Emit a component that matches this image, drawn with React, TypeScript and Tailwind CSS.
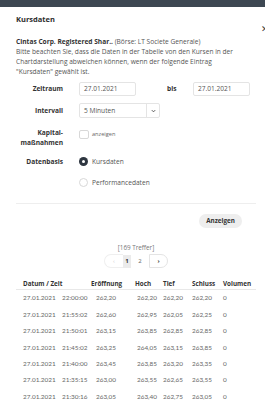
import React from "react";

const rows = [
  ["27.01.2021", "22:00:00", "262,20", "262,20", "262,20", "262,20", "0"],
  ["27.01.2021", "21:55:02", "262,60", "262,95", "262,05", "262,25", "0"],
  ["27.01.2021", "21:50:01", "263,15", "263,85", "262,85", "262,85", "0"],
  ["27.01.2021", "21:45:02", "263,25", "264,05", "263,15", "263,85", "0"],
  ["27.01.2021", "21:40:00", "263,45", "263,85", "263,20", "263,35", "0"],
  ["27.01.2021", "21:35:15", "263,00", "263,55", "262,65", "263,55", "0"],
  ["27.01.2021", "21:30:16", "263,05", "263,40", "262,75", "263,05", "0"],
];

export default function App() {
  return (
    <div
      className="w-[265px] h-[400px] overflow-hidden bg-white relative text-[#3a3a3a]"
      style={{ fontFamily: "'Open Sans', 'Noto Sans', sans-serif" }}
    >
      <div className="h-[7px] bg-[#3d4752]" />
      <div className="pl-[16px] pr-[9px] relative">
        <div className="mt-[9px] h-[8px] flex items-center text-[7.5px] font-bold text-[#2d2d2d]">
          Kursdaten
        </div>
        <div className="absolute right-[-4px] top-[8px] text-[9px] text-[#444] leading-none">✕</div>
        <div className="mt-[13px] text-[6.6px] leading-[10px] text-[#555]">
          <div>
            <span className="font-bold text-[#333]">Cintas Corp. Registered Shar..</span> (Börse: LT Societe Generale)
          </div>
          <div>Bitte beachten Sie, dass die Daten in der Tabelle von den Kursen in der</div>
          <div>Chartdarstellung abweichen können, wenn der folgende Eintrag</div>
          <div>"Kursdaten" gewählt ist.</div>
        </div>

        {/* Zeitraum */}
        <div className="mt-[5px] flex items-center h-[14px]">
          <div className="w-[47px] text-right text-[6.6px] font-bold text-[#333]">Zeitraum</div>
          <div className="ml-[16px] w-[57px] h-[14px] border border-[#e4e4e4] rounded-[2px] flex items-center pl-[4px] text-[6.6px] text-[#555]">
            27.01.2021
          </div>
          <div className="ml-[31px] w-[26px] text-[6.6px] font-bold text-[#333]">bis</div>
          <div className="w-[57px] h-[14px] border border-[#e4e4e4] rounded-[2px] flex items-center pl-[4px] text-[6.6px] text-[#555]">
            27.01.2021
          </div>
        </div>

        {/* Intervall */}
        <div className="mt-[7px] flex items-center h-[15px]">
          <div className="w-[47px] text-right text-[6.6px] font-bold text-[#333]">Intervall</div>
          <div className="ml-[16px] w-[81px] h-[15px] border border-[#e4e4e4] rounded-[2px] flex items-center text-[6.6px] text-[#555]">
            <div className="flex-1 pl-[4px]">5 Minuten</div>
            <div className="w-[13px] h-full border-l border-[#e4e4e4] flex items-center justify-center">
              <svg width="5" height="4" viewBox="0 0 6 4">
                <path d="M1 1 L3 3 L5 1" fill="none" stroke="#555" strokeWidth="1.2" />
              </svg>
            </div>
          </div>
        </div>

        {/* Kapitalmaßnahmen */}
        <div className="mt-[10px] flex items-start">
          <div className="w-[47px] text-right text-[6.6px] font-bold text-[#333] leading-[10px]">
            <div>Kapital-</div>
            <div>maßnahmen</div>
          </div>
          <div className="ml-[16px] mt-[2px] flex items-center">
            <div className="w-[10px] h-[9px] border border-[#d8d8d8] rounded-[2px]" />
            <div className="ml-[3px] text-[5.6px] text-[#666]">anzeigen</div>
          </div>
        </div>

        {/* Datenbasis */}
        <div className="mt-[9px] flex items-center h-[10px]">
          <div className="w-[47px] text-right text-[6.6px] font-bold text-[#333]">Datenbasis</div>
          <div className="ml-[16px] flex items-center">
            <div className="w-[9px] h-[9px] rounded-full bg-[#2e3640] flex items-center justify-center">
              <div className="w-[3px] h-[3px] rounded-full bg-white" />
            </div>
            <div className="ml-[4px] text-[6.6px] text-[#555]">Kursdaten</div>
          </div>
        </div>
        <div className="mt-[11px] flex items-center h-[10px]">
          <div className="ml-[63px] flex items-center">
            <div className="w-[9px] h-[9px] rounded-full border border-[#d8d8d8]" />
            <div className="ml-[4px] text-[6.6px] text-[#555]">Performancedaten</div>
          </div>
        </div>

        <div className="mt-[15px] border-t border-[#eeeeee]" />

        <div className="mt-[10px] flex justify-end pr-[14px]">
          <div className="w-[43px] h-[14px] rounded-full bg-[#eeeeee] flex items-center justify-center text-[6.3px] font-bold text-[#333]">
            Anzeigen
          </div>
        </div>

        <div className="mt-[16px] text-center text-[6.3px] text-[#777] leading-[8px]">[169 Treffer]</div>
        <div className="mt-[2px] flex justify-center items-center h-[14px] text-[6px] text-[#666]">
          <div className="w-[19px] h-[14px] rounded-l-full border border-[#efefef] border-r-0 flex items-center justify-center text-[#ccc]">
            ‹
          </div>
          <div className="w-[8px] h-[13px] bg-[#ebebeb] flex items-center justify-center font-bold text-[#333]">1</div>
          <div className="w-[18px] flex items-center justify-center">2</div>
          <div className="w-[19px] h-[14px] rounded-r-full border border-[#e4e4e4] flex items-center justify-center text-[#333] font-bold">
            ›
          </div>
        </div>

        {/* Table */}
        <div className="mt-[12px] pb-[1px] border-b border-[#e8e8e8] flex items-center h-[10px] text-[6.3px] font-bold text-[#333]">
          <div className="ml-[7px] w-[68px]">Datum / Zeit</div>
          <div className="w-[44px]">Eröffnung</div>
          <div className="w-[28px]">Hoch</div>
          <div className="w-[29px]">Tief</div>
          <div className="w-[31px]">Schluss</div>
          <div>Volumen</div>
        </div>
        <div style={{ fontFamily: "Lato, 'Open Sans', sans-serif" }} className="text-[6.4px] text-[#666]">
          {rows.map((r, i) => (
            <div key={i} className="flex items-center h-[16.4px]">
              <div className="ml-[7px] w-[39px]">{r[0]}</div>
              <div className="w-[34px]">{r[1]}</div>
              <div className="w-[41px]">{r[2]}</div>
              <div className="w-[26px]">{r[3]}</div>
              <div className="w-[29px]">{r[4]}</div>
              <div className="w-[31px]">{r[5]}</div>
              <div>{r[6]}</div>
            </div>
          ))}
        </div>
      </div>
    </div>
  );
}
